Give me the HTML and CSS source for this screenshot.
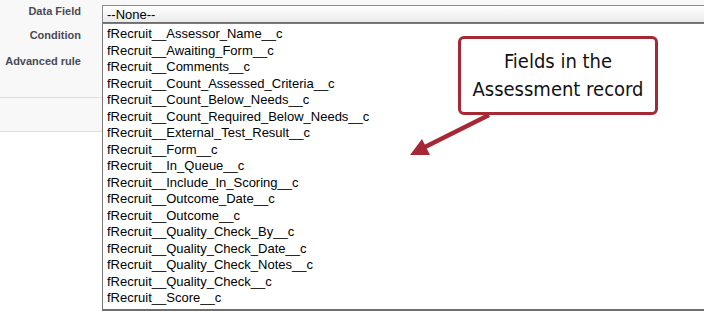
FILE: index.html
```html
<!DOCTYPE html>
<html>
<head>
<meta charset="utf-8">
<link rel="stylesheet" href="styles.css">
</head>
<body>
<div class="page">
  <div class="form">
    <div class="row row-field">
      <div class="label">Data Field</div>
      <div class="select">--None--</div>
    </div>
    <div class="row row-cond">
      <div class="label">Condition</div>
    </div>
    <div class="row row-adv">
      <div class="label">Advanced rule</div>
    </div>
  </div>
  <div class="section"></div>
  <div class="blank"></div>

  <ul class="listbox">
    <li>fRecruit__Assessor_Name__c</li>
    <li>fRecruit__Awaiting_Form__c</li>
    <li>fRecruit__Comments__c</li>
    <li>fRecruit__Count_Assessed_Criteria__c</li>
    <li>fRecruit__Count_Below_Needs__c</li>
    <li>fRecruit__Count_Required_Below_Needs__c</li>
    <li>fRecruit__External_Test_Result__c</li>
    <li>fRecruit__Form__c</li>
    <li>fRecruit__In_Queue__c</li>
    <li>fRecruit__Include_In_Scoring__c</li>
    <li>fRecruit__Outcome_Date__c</li>
    <li>fRecruit__Outcome__c</li>
    <li>fRecruit__Quality_Check_By__c</li>
    <li>fRecruit__Quality_Check_Date__c</li>
    <li>fRecruit__Quality_Check_Notes__c</li>
    <li>fRecruit__Quality_Check__c</li>
    <li>fRecruit__Score__c</li>
    <li>fRecruit__Selection_Criteria__c</li>
  </ul>

  <div class="callout">Fields in the<br>Assessment record</div>
  <svg class="arrow" width="704" height="312" viewBox="0 0 704 312">
    <line x1="489" y1="115" x2="421" y2="149" stroke="#a52834" stroke-width="4.5"/>
    <polygon points="410,155 422,139 430,155" fill="#a52834"/>
  </svg>
</div>
</body>
</html>
```

FILE: styles.css
```css
html, body {
  margin: 0;
  padding: 0;
  background: #ffffff;
  overflow: hidden;
}

.page {
  position: relative;
  width: 704px;
  height: 312px;
  overflow: hidden;
  font-family: "Liberation Sans", Arial, sans-serif;
}

.form {
  box-sizing: border-box;
  height: 98px;
  padding-top: 5px;
  background: #f8f8f8;
  border-bottom: 1px solid #dedede;
  display: flex;
  flex-direction: column;
  gap: 6px;
}

.row {
  display: flex;
  align-items: flex-start;
}

.row-field { height: 18px; }
.row-cond { height: 20px; }

.label {
  box-sizing: border-box;
  width: 102px;
  padding-right: 21px;
  text-align: right;
  font-weight: bold;
  font-size: 11px;
  line-height: 12px;
  color: #4a4a56;
  flex: none;
}

.select {
  box-sizing: border-box;
  width: 640px;
  height: 19px;
  flex: none;
  border: 1px solid #8a8a8a;
  border-bottom: 2px solid #6e6e6e;
  background: linear-gradient(#ffffff, #ebebeb);
  font-size: 13px;
  line-height: 17px;
  padding-left: 4px;
  color: #000;
}

.section {
  box-sizing: border-box;
  height: 34px;
  background: #f8f8f8;
  border-bottom: 1px solid #dedede;
}

.blank {
  height: 180px;
  background: #fff;
}

.listbox {
  position: absolute;
  left: 102px;
  top: 23px;
  width: 640px;
  height: 288px;
  box-sizing: border-box;
  margin: 0;
  padding: 2px 0 0 0;
  list-style: none;
  background: #fff;
  border: 1px solid #7a7a7a;
  border-bottom: 2px solid #6e6e6e;
  overflow: hidden;
}

.listbox li {
  font-size: 13px;
  line-height: 16.5px;
  height: 16.5px;
  padding-left: 4px;
  color: #000;
  white-space: nowrap;
}

.callout {
  position: absolute;
  left: 458px;
  top: 36px;
  width: 200px;
  height: 79px;
  box-sizing: border-box;
  border: 3px solid #a52834;
  border-radius: 6px;
  background: #fff;
  display: flex;
  align-items: center;
  justify-content: center;
  text-align: center;
  font-family: "DejaVu Sans Condensed", "DejaVu Sans", sans-serif;
  font-size: 20px;
  line-height: 27.5px;
  color: #111;
}

.arrow {
  position: absolute;
  left: 0;
  top: 0;
  pointer-events: none;
}
```
